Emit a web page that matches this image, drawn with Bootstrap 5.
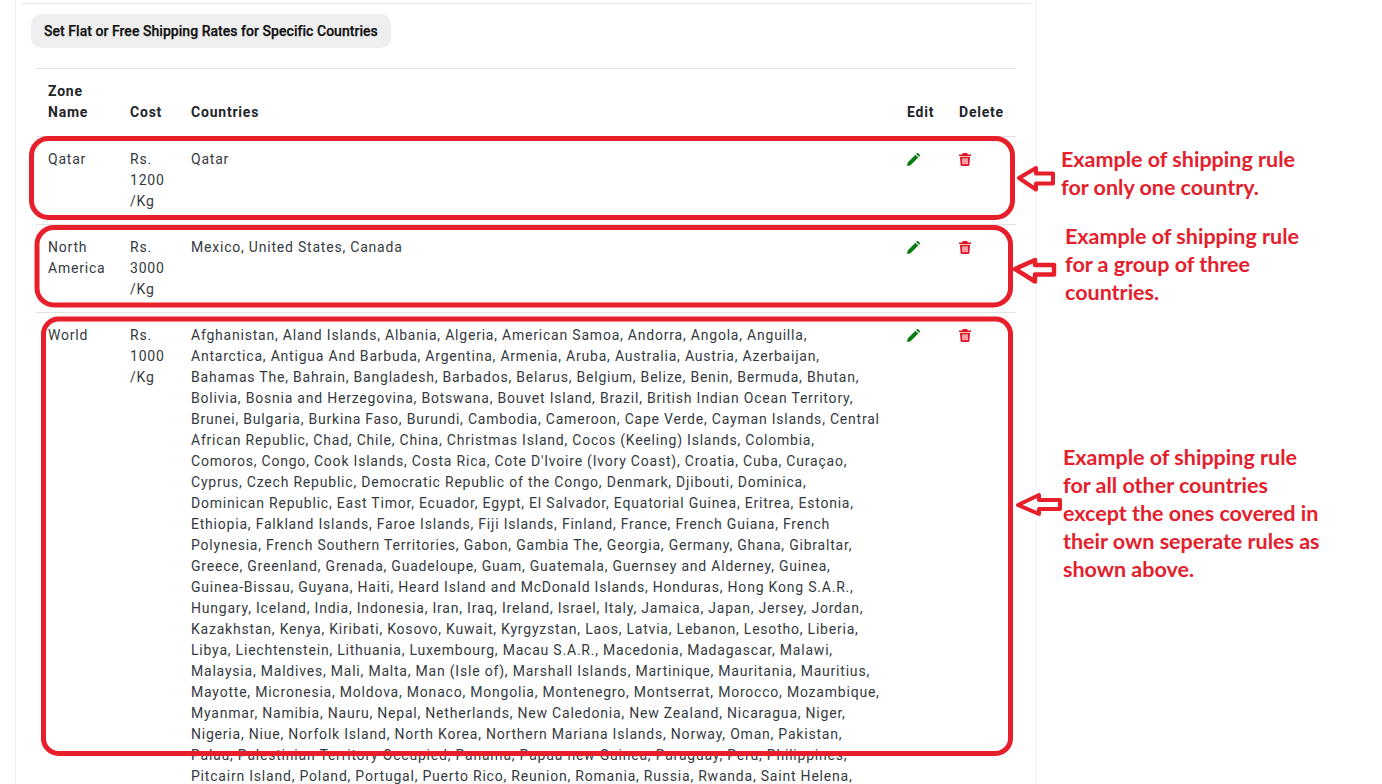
<!DOCTYPE html>
<html lang="en">
<head>
<meta charset="utf-8">
<title>Shipping zones</title>
<link rel="stylesheet" href="https://cdn.jsdelivr.net/npm/bootstrap@5.3.0/dist/css/bootstrap.min.css">
<style>
html,body{height:784px;overflow:hidden;background:#fff}
.stage{position:relative;height:784px;overflow:hidden;font-family:Roboto,sans-serif}
.panel{margin-left:15px;width:1022px;height:900px;border:0;border-left:1px solid #f0f1f8;border-right:1px solid #f0f1f8;border-radius:0;padding:3px 5px 0 6px}
.top-rule{border-top:1px solid #e6e6e6}
.rate-btn{display:inline-block;margin:10px 0 20px 9px;height:34px;padding:0 13px;background:#efefef;border:0;border-radius:10px;font:500 14px/33px Roboto,sans-serif;letter-spacing:.04px;color:#111;-webkit-text-stroke:.25px #111}
.rate-btn:hover{background:#efefef;color:#111}
.zones{width:980px;margin:0 0 0 14px;table-layout:fixed;font-size:14px;line-height:21px;letter-spacing:.79px;color:#2b3035;border-top:1px solid #e2e3e5}
.zones th{font-weight:700;padding:12px 12px 13px;vertical-align:bottom;color:#212529;border-bottom:1px solid #dee2e6}
.zones td{padding:12px;vertical-align:top;border-bottom:1px solid #e2e3e5;color:#343a40}
.tool-ico{display:block;margin-top:4px}
.marks{position:absolute;left:0;top:0;pointer-events:none}
.note{position:absolute;margin:0;font:700 21.5px/28px Lato,"Liberation Sans",sans-serif;color:#e3202c;white-space:nowrap}
.note-a{left:1061px;top:145px}
.note-b{left:1065px;top:222px}
.note-c{left:1063px;top:443px}
</style>
</head>
<body>
<div class="stage">
  <div class="panel card">
    <div class="top-rule"></div>
    <div><button type="button" class="btn rate-btn">Set Flat or Free Shipping Rates for Specific Countries</button></div>
    <table class="table zones mb-0">
      <colgroup><col style="width:82px"><col style="width:61px"><col style="width:716px"><col style="width:52px"><col style="width:69px"></colgroup>
      <thead>
        <tr><th>Zone Name</th><th>Cost</th><th>Countries</th><th class="text-nowrap">Edit</th><th class="text-nowrap">Delete</th></tr>
      </thead>
      <tbody>
        <tr>
          <td>Qatar</td><td>Rs. 1200 /Kg</td><td>Qatar</td>
          <td><svg class="tool-ico" width="13" height="13" viewBox="0 0 13 13"><path fill="#0b7a12" d="M0 13l.7-3.6L8.4 1.7l2.9 2.9-7.7 7.7zM9.2.9l.6-.6c.4-.4 1-.4 1.4 0l1.5 1.5c.4.4.4 1 0 1.4l-.6.6z"/></svg></td>
          <td><svg class="tool-ico" width="12" height="13" viewBox="0 0 12 13"><path fill="#e0101e" fill-rule="evenodd" d="M4 0h4l.7 1.6H12v1.3H0V1.6h3.3zM1 3.7h10l-.6 8.1c0 .7-.5 1.2-1.2 1.2H2.800c-.7 0-1.200-.5-1.200-1.200zM3.400 5.200v6h1.200v-6zm2 0v6h1.200v-6zm2 0v6h1.200v-6z"/></svg></td>
        </tr>
        <tr>
          <td>North America</td><td>Rs. 3000 /Kg</td><td>Mexico, United States, Canada</td>
          <td><svg class="tool-ico" width="13" height="13" viewBox="0 0 13 13"><path fill="#0b7a12" d="M0 13l.7-3.6L8.4 1.7l2.9 2.9-7.7 7.7zM9.2.9l.6-.6c.4-.4 1-.4 1.4 0l1.5 1.5c.4.4.4 1 0 1.4l-.6.6z"/></svg></td>
          <td><svg class="tool-ico" width="12" height="13" viewBox="0 0 12 13"><path fill="#e0101e" fill-rule="evenodd" d="M4 0h4l.7 1.6H12v1.3H0V1.6h3.3zM1 3.7h10l-.6 8.1c0 .7-.5 1.2-1.2 1.2H2.800c-.7 0-1.200-.5-1.200-1.200zM3.400 5.200v6h1.200v-6zm2 0v6h1.200v-6zm2 0v6h1.200v-6z"/></svg></td>
        </tr>
        <tr>
          <td>World</td><td>Rs. 1000 /Kg</td>
          <td>Afghanistan, Aland Islands, Albania, Algeria, American Samoa, Andorra, Angola, Anguilla, Antarctica, Antigua And Barbuda, Argentina, Armenia, Aruba, Australia, Austria, Azerbaijan, Bahamas The, Bahrain, Bangladesh, Barbados, Belarus, Belgium, Belize, Benin, Bermuda, Bhutan, Bolivia, Bosnia and Herzegovina, Botswana, Bouvet Island, Brazil, British Indian Ocean Territory, Brunei, Bulgaria, Burkina Faso, Burundi, Cambodia, Cameroon, Cape Verde, Cayman Islands, Central African Republic, Chad, Chile, China, Christmas Island, Cocos (Keeling) Islands, Colombia, Comoros, Congo, Cook Islands, Costa Rica, Cote D'Ivoire (Ivory Coast), Croatia, Cuba, Curaçao, Cyprus, Czech Republic, Democratic Republic of the Congo, Denmark, Djibouti, Dominica, Dominican Republic, East Timor, Ecuador, Egypt, El Salvador, Equatorial Guinea, Eritrea, Estonia, Ethiopia, Falkland Islands, Faroe Islands, Fiji Islands, Finland, France, French Guiana, French Polynesia, French Southern Territories, Gabon, Gambia The, Georgia, Germany, Ghana, Gibraltar, Greece, Greenland, Grenada, Guadeloupe, Guam, Guatemala, Guernsey and Alderney, Guinea, Guinea-Bissau, Guyana, Haiti, Heard Island and McDonald Islands, Honduras, Hong Kong S.A.R., Hungary, Iceland, India, Indonesia, Iran, Iraq, Ireland, Israel, Italy, Jamaica, Japan, Jersey, Jordan, Kazakhstan, Kenya, Kiribati, Kosovo, Kuwait, Kyrgyzstan, Laos, Latvia, Lebanon, Lesotho, Liberia, Libya, Liechtenstein, Lithuania, Luxembourg, Macau S.A.R., Macedonia, Madagascar, Malawi, Malaysia, Maldives, Mali, Malta, Man (Isle of), Marshall Islands, Martinique, Mauritania, Mauritius, Mayotte, Micronesia, Moldova, Monaco, Mongolia, Montenegro, Montserrat, Morocco, Mozambique, Myanmar, Namibia, Nauru, Nepal, Netherlands, New Caledonia, New Zealand, Nicaragua, Niger, Nigeria, Niue, Norfolk Island, North Korea, Northern Mariana Islands, Norway, Oman, Pakistan, Palau, Palestinian Territory Occupied, Panama, Papua new Guinea, Paraguay, Peru, Philippines, Pitcairn Island, Poland, Portugal, Puerto Rico, Reunion, Romania, Russia, Rwanda, Saint Helena,</td>
          <td><svg class="tool-ico" width="13" height="13" viewBox="0 0 13 13"><path fill="#0b7a12" d="M0 13l.7-3.6L8.4 1.7l2.9 2.9-7.7 7.7zM9.2.9l.6-.6c.4-.4 1-.4 1.4 0l1.5 1.5c.4.4.4 1 0 1.4l-.6.6z"/></svg></td>
          <td><svg class="tool-ico" width="12" height="13" viewBox="0 0 12 13"><path fill="#e0101e" fill-rule="evenodd" d="M4 0h4l.7 1.6H12v1.3H0V1.6h3.3zM1 3.7h10l-.6 8.1c0 .7-.5 1.2-1.2 1.2H2.800c-.7 0-1.200-.5-1.200-1.200zM3.400 5.200v6h1.200v-6zm2 0v6h1.200v-6zm2 0v6h1.200v-6z"/></svg></td>
        </tr>
      </tbody>
    </table>
  </div>

  <svg class="marks" width="1382" height="784" viewBox="0 0 1382 784" fill="none" stroke="#e71f2b" stroke-width="5" stroke-linejoin="round">
    <rect x="31.5" y="138.5" width="981" height="79" rx="17"/>
    <rect x="37" y="227.5" width="973.5" height="77.5" rx="17"/>
    <rect x="43.5" y="319" width="967" height="434.5" rx="15"/>
    <path stroke-width="4" d="M1019 178l17-10v5.500h17v10h-17v6z"/>
    <path stroke-width="4.5" d="M1015 269l20-9v5h19v9.500h-19v7z"/>
    <path stroke-width="4" d="M1018 505l21-10v5h21v9h-21v5z"/>
  </svg>
  <p class="note note-a">Example of shipping rule<br>for only one country.</p>
  <p class="note note-b">Example of shipping rule<br>for a group of three<br>countries.</p>
  <p class="note note-c">Example of shipping rule<br>for all other countries<br>except the ones covered in<br>their own seperate rules as<br>shown above.</p>
</div>
<script src="https://cdn.jsdelivr.net/npm/bootstrap@5.3.0/dist/js/bootstrap.bundle.min.js"></script>
</body>
</html>
